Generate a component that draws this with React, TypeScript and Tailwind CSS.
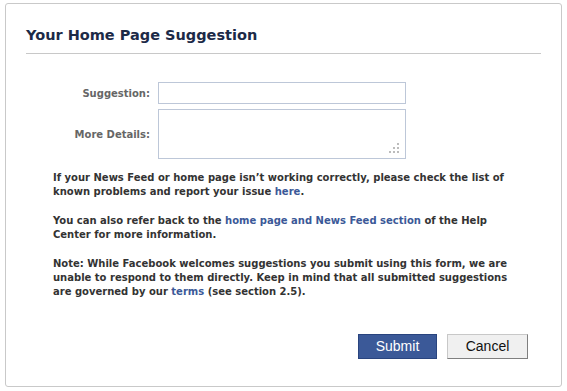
const font = { fontFamily: '"DejaVu Sans", Verdana, sans-serif' };

function Grip() {
  const dots = [
    [8, 0],
    [4, 4],
    [8, 4],
    [0, 8],
    [4, 8],
    [8, 8],
  ];
  return (
    <svg className="absolute right-[7px] bottom-[6px]" width="10" height="10" viewBox="0 0 10 10">
      {dots.map(([x, y]) => (
        <rect key={`${x}-${y}`} x={x} y={y} width="2" height="2" fill="#bcbcbc" />
      ))}
    </svg>
  );
}

export default function App() {
  return (
    <div className="w-[567px] h-[391px] bg-white pt-[3px] pl-[5px]" style={font}>
      <div className="w-[557px] h-[384px] border border-[#c9c9c9] rounded-[3px] bg-white px-5 pt-[21px] flex flex-col">
        <h2 className="text-[14.5px] leading-[20px] font-bold text-[#1c2a47] pb-[8px] border-b border-[#c8c8c8] w-[515px]">
          Your Home Page Suggestion
        </h2>

        <div className="mt-[28px] grid grid-cols-[124px_248px] gap-x-2 gap-y-[5px] text-[10px] font-bold text-[#666]">
          <label className="text-right self-center">Suggestion:</label>
          <input className="h-[22px] border border-[#bdc7d8] outline-none px-1" />
          <label className="text-right self-center">More Details:</label>
          <div className="relative h-[50px]">
            <textarea className="w-full h-full border border-[#bdc7d8] outline-none resize-none px-1" />
            <Grip />
          </div>
        </div>

        <div className="ml-[27px] mt-[12px] text-[10px] leading-[14px] font-bold text-[#333] flex flex-col gap-[15px] whitespace-nowrap">
          <p>
            If your News Feed or home page isn’t working correctly, please check the list of
            <br />
            known problems and report your issue <a className="text-[#3b5998]">here</a>.
          </p>
          <p>
            You can also refer back to the{" "}
            <a className="text-[#3b5998]">home page and News Feed section</a> of the Help
            <br />
            Center for more information.
          </p>
          <p>
            Note: While Facebook welcomes suggestions you submit using this form, we are
            <br />
            unable to respond to them directly. Keep in mind that all submitted suggestions
            <br />
            are governed by our <a className="text-[#3b5998]">terms</a> (see section 2.5).
          </p>
        </div>

        <div className="mt-[35px] flex justify-end gap-[10px] pr-[13px]" style={{ fontFamily: '"Liberation Sans", Arial, sans-serif' }}>
          <button className="w-[79px] h-[25px] bg-[#3b5998] border border-[#29447e] text-white text-[14px]">
            Submit
          </button>
          <button className="w-[81px] h-[25px] bg-[#f0f0f0] border border-[#c8c8c8] border-r-[#7f7f7f] border-b-[#7f7f7f] text-[#111] text-[14px]">
            Cancel
          </button>
        </div>
      </div>
    </div>
  );
}
